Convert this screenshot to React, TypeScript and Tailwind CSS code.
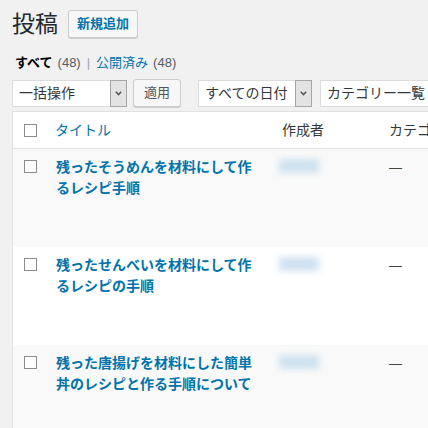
import React from "react";

type Post = { id: number; title: string };

const posts: Post[] = [
  { id: 1, title: "残ったそうめんを材料にして作るレシピ手順" },
  { id: 2, title: "残ったせんべいを材料にして作るレシピの手順" },
  { id: 3, title: "残った唐揚げを材料にした簡単丼のレシピと作る手順について" },
];

const Checkbox = () => (
  <div className="w-[13px] h-[13px] border border-[#8c8c8c] bg-white" />
);

// select box with the grey arrow block on the right
const Select = ({ label, width }: { label: string; width: string }) => (
  <div
    className={`${width} h-[27px] flex items-stretch bg-white border border-[#dcdcdc] shrink-0`}
  >
    <div className="flex-1 flex items-center pl-[6px] text-[14px] text-[#32373c] whitespace-nowrap overflow-hidden">
      {label}
    </div>
    <div className="w-[17px] flex items-center justify-center bg-[#e3e3e3] border border-[#a6a6a6] -my-px -mr-px">
      <svg width="7" height="5" viewBox="0 0 7 5">
        <path d="M0.8 0.8 L3.5 3.6 L6.2 0.8" fill="none" stroke="#555" strokeWidth="1.5" />
      </svg>
    </div>
  </div>
);

const App = () => {
  return (
    <div className="w-[428px] h-[428px] overflow-hidden bg-[#f1f1f1] font-['Liberation_Sans','Noto_Sans_CJK_JP',sans-serif]">
      <div className="pl-3 pt-[10px]">
        {/* heading */}
        <div className="flex items-center gap-[10px] h-[28px]">
          <h1 className="text-[23px] leading-[28px] text-[#23282d] font-normal -mt-[1px]">投稿</h1>
          <button className="h-[28px] px-[8px] rounded-[3px] border border-[#cccccc] bg-[#f7f7f7] text-[13px] font-bold text-[#0073aa] shadow-[0_1px_0_#cccccc]">
            新規追加
          </button>
        </div>

        {/* filters */}
        <div className="mt-[16px] flex items-center text-[13px] leading-[18px] whitespace-nowrap pl-[3px]">
          <span className="font-bold text-black">すべて</span>
          <span className="text-[#555d66] ml-[5px]">(48)</span>
          <span className="text-[#a0a5aa] mx-[6px]">|</span>
          <span className="text-[#0073aa]">公開済み</span>
          <span className="text-[#555d66] ml-[5px]">(48)</span>
        </div>

        {/* tablenav */}
        <div className="mt-[7px] flex items-center whitespace-nowrap">
          <Select label="一括操作" width="w-[115px]" />
          <button className="ml-[6px] w-[48px] h-[28px] rounded-[3px] border border-[#cccccc] bg-[#f7f7f7] text-[13px] text-[#555] shadow-[0_1px_0_#cccccc] shrink-0">
            適用
          </button>
          <div className="ml-[17px]">
            <Select label="すべての日付" width="w-[114px]" />
          </div>
          <div className="ml-[8px]">
            <Select label="カテゴリー一覧" width="w-[130px]" />
          </div>
        </div>

        {/* table */}
        <div className="mt-[4px] w-[440px] border-l border-t border-[#e1e1e1] bg-white">
          <div className="flex h-[37px] items-center border-b border-[#e1e1e1] bg-white text-[14px] whitespace-nowrap">
            <div className="w-[33px] pl-[11px] shrink-0">
              <Checkbox />
            </div>
            <div className="w-[236px] pl-[9px] text-[#0073aa] shrink-0">タイトル</div>
            <div className="w-[107px] text-[#32373c] shrink-0">作成者</div>
            <div className="text-[#32373c]">カテゴリー</div>
          </div>

          {posts.map((post, i) => (
            <div
              key={post.id}
              className={`flex h-[98px] items-start ${i % 2 === 0 ? "bg-[#f9f9f9]" : "bg-white"}`}
            >
              <div className="w-[33px] pl-[11px] pt-[11px] shrink-0">
                <Checkbox />
              </div>
              <div className="w-[236px] pl-[10px] pt-[8px] shrink-0">
                <div className="w-[204px] text-[14px] leading-[21px] font-bold text-[#0073aa]">
                  {post.title}
                </div>
              </div>
              <div className="w-[107px] pt-[10px] shrink-0">
                <div className="-ml-[3px] w-[40px] h-[14px] bg-[#cfe2f0] blur-[3px]" />
              </div>
              <div className="pt-[8px] text-[13px] leading-[21px] text-[#444]">—</div>
            </div>
          ))}
        </div>
      </div>
    </div>
  );
};

export default App;
